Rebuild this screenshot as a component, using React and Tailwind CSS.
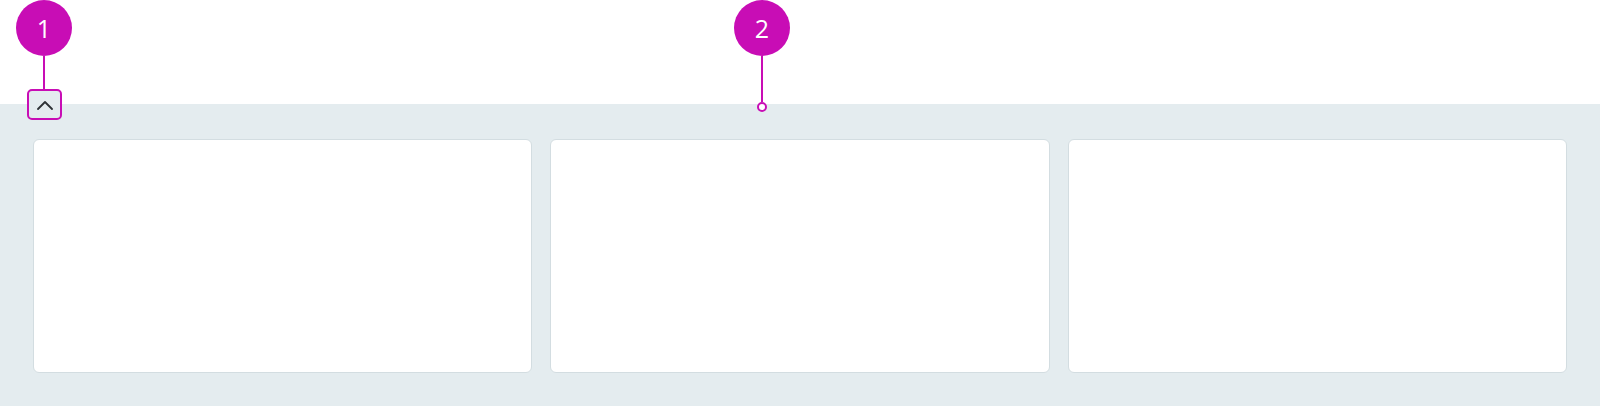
function Marker({ n, className, children }) {
  return (
    <div className={`absolute flex flex-col items-center ${className}`}>
      <div className="w-14 h-14 rounded-full bg-[#c80db5] flex items-center justify-center text-white text-[25px] font-normal leading-none font-['Open_Sans',sans-serif]">
        {n}
      </div>
      {children}
    </div>
  );
}

export default function App() {
  return (
    <div className="relative w-[1600px] h-[406px] bg-white overflow-hidden">
      <div className="h-[104px]" />

      <div className="h-[302px] bg-[#e4ecef] pt-[35px] px-[33px] pb-[33px]">
        <div className="grid grid-cols-3 gap-[18px] h-full">
          <div className="bg-white border-[1.5px] border-[#d3dde1] rounded-[6px]" />
          <div className="bg-white border-[1.5px] border-[#d3dde1] rounded-[6px]" />
          <div className="bg-white border-[1.5px] border-[#d3dde1] rounded-[6px]" />
        </div>
      </div>

      {/* collapse toggle */}
      <button className="absolute left-[27px] top-[89px] w-[35px] h-[31px] bg-[#e4ecef] border-2 border-[#c80db5] rounded-[5px] flex items-center justify-center">
        <svg width="16" height="10" viewBox="0 0 16 10" fill="none">
          <path d="M1 9 L8 2 L15 9" stroke="#2d3236" strokeWidth="1.8" strokeLinecap="round" strokeLinejoin="round" />
        </svg>
      </button>

      {/* annotation markers */}
      <Marker n="1" className="left-[16px] top-0">
        <div className="w-[2px] h-[33px] bg-[#c80db5]" />
      </Marker>
      <Marker n="2" className="left-[734px] top-0">
        <div className="w-[2px] h-[46px] bg-[#c80db5]" />
        <div className="w-[10px] h-[10px] rounded-full border-2 border-[#c80db5] bg-white" />
      </Marker>
    </div>
  );
}
